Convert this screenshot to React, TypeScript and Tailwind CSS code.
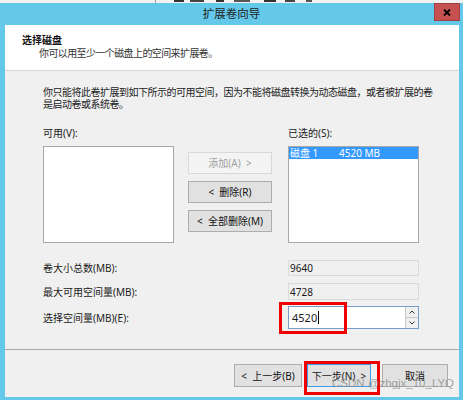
const font = { fontFamily: '"Noto Sans", "Noto Sans CJK SC", sans-serif' };

function Btn({
  children,
  className = '',
  disabled = false,
}: {
  children: React.ReactNode;
  className?: string;
  disabled?: boolean;
}) {
  return (
    <div
      className={`h-[22px] flex items-center justify-center border text-[10px] leading-[12px] whitespace-pre ${
        disabled
          ? 'bg-[#f4f4f4] border-[#d9d9d9] text-[#a0a0a0]'
          : 'bg-[#e1e1e1] border-[#adadad] text-[#111]'
      } ${className}`}
    >
      {children}
    </div>
  );
}

function Spinner() {
  return (
    <div className="w-[13px] flex flex-col border-l border-[#c8c8c8] bg-[#f0f0f0]">
      <div className="flex-1 flex items-center justify-center border-b border-[#c8c8c8]">
        <svg width="6" height="4" viewBox="0 0 6 4">
          <path d="M0.5 3.5 L3 1 L5.5 3.5" fill="none" stroke="#333" strokeWidth="1" />
        </svg>
      </div>
      <div className="flex-1 flex items-center justify-center">
        <svg width="6" height="4" viewBox="0 0 6 4">
          <path d="M0.5 0.5 L3 3 L5.5 0.5" fill="none" stroke="#333" strokeWidth="1" />
        </svg>
      </div>
    </div>
  );
}

export default function App() {
  return (
    <div
      className="w-[463px] h-[400px] bg-[#63c8ea] flex flex-col overflow-hidden text-[#1a1a1a]"
      style={font}
    >
      {/* strip of the window behind */}
      <div className="h-[3px] bg-[#f2f2f2] flex items-start">
        <div className="ml-[155px] w-[1px] h-[3px] bg-[#9a9a9a]" />
        <div className="ml-[18px] w-[10px] h-[2px] bg-[#333]" />
        <div className="ml-[6px] w-[14px] h-[2px] bg-[#444]" />
        <div className="ml-[12px] w-[8px] h-[2px] bg-[#333]" />
        <div className="ml-[10px] w-[16px] h-[2px] bg-[#555]" />
        <div className="ml-[14px] w-[12px] h-[2px] bg-[#333]" />
        <div className="ml-[9px] w-[10px] h-[2px] bg-[#444]" />
        <div className="ml-[11px] w-[6px] h-[2px] bg-[#555]" />
      </div>

      {/* title bar */}
      <div className="relative h-[22px] flex items-center justify-center">
        <span className="text-[11.5px] leading-[14px] text-[#222]">扩展卷向导</span>
        <div className="absolute top-0 right-[3px] w-[26px] h-[18px] bg-[#c75050] border border-[#a04040] flex items-center justify-center">
          <svg width="8" height="7" viewBox="0 0 8 7">
            <path d="M1 0.5 L7 6.5 M7 0.5 L1 6.5" stroke="#000" strokeWidth="1.8" />
          </svg>
        </div>
      </div>

      {/* client area */}
      <div className="ml-[5px] mr-[4px] mb-[3px] flex-1 flex flex-col bg-[#f0f0f0]">
        {/* header */}
        <div className="h-[46px] bg-white border-b border-[#d8d8d8] pl-[17px] pt-[9px]">
          <div className="text-[10px] leading-[12px] font-bold text-[#111]">选择磁盘</div>
          <div className="mt-[1px] ml-[17px] text-[10px] leading-[12px] tracking-[-0.6px] text-[#333]">
            你可以用至少一个磁盘上的空间来扩展卷。
          </div>
        </div>

        {/* body */}
        <div className="h-[278px] pl-[38px] pt-[15px] text-[10px] leading-[12px]">
          <div className="whitespace-nowrap text-[#222] text-[10px] leading-[12px] tracking-[-0.5px]">
            你只能将此卷扩展到如下所示的可用空间，因为不能将磁盘转换为动态磁盘，或者被扩展的卷
            <br />
            是启动卷或系统卷。
          </div>

          <div className="mt-[17px] flex h-[12px]">
            <div className="w-[245px]">可用(V):</div>
            <div>已选的(S):</div>
          </div>

          <div className="mt-[7px] flex h-[97px]">
            <div className="w-[131px] bg-white border border-[#a8a8a8]" />
            <div className="ml-[14px] w-[84px] pt-[6px] flex flex-col gap-[7px]">
              <Btn disabled>{'添加(A)  >'}</Btn>
              <Btn>{'<  删除(R)'}</Btn>
              <Btn>{'<  全部删除(M)'}</Btn>
            </div>
            <div className="ml-[16px] w-[131px] bg-white border border-[#a8a8a8]">
              <div className="h-[12px] bg-[#3399ff] text-white flex items-center whitespace-nowrap">
                <span className="ml-[1px] w-[49px]">磁盘 1</span>
                <span>4520 MB</span>
              </div>
            </div>
          </div>

          <div className="mt-[17px] flex items-center h-[16px]">
            <div className="w-[245px]">卷大小总数(MB):</div>
            <div className="w-[131px] h-[16px] border border-[#dadada] flex items-center pl-[1px]">9640</div>
          </div>

          <div className="mt-[7px] flex items-center h-[17px]">
            <div className="w-[245px]">最大可用空间量(MB):</div>
            <div className="w-[131px] h-[17px] border border-[#dadada] flex items-center pl-[1px]">4728</div>
          </div>

          <div className="mt-[6px] flex items-center h-[23px]">
            <div className="w-[245px]">选择空间量(MB)(E):</div>
            <div className="relative w-[131px] h-[23px] border border-[#7a9cc8] bg-white flex">
              <div className="flex-1 flex items-center pl-[3px] text-[11px]">
                4520
                <span className="ml-[1px] w-[1px] h-[13px] bg-black" />
              </div>
              <Spinner />
              <div className="absolute left-[-10px] top-[-5px] w-[68px] h-[32px] border-[3px] border-[#f00000]" />
            </div>
          </div>
        </div>

        {/* footer */}
        <div className="relative flex-1 border-t border-[#a8a8a8] flex justify-end items-start pt-[14px] pr-[11px]">
          <Btn className="w-[68px] h-[23px]">{'<  上一步(B)'}</Btn>
          <div className="relative ml-[5px]">
            <div className="w-[64px] h-[23px] flex items-center justify-center border border-[#3c9ae6] bg-[#e1e1e1] text-[10px] leading-[12px] whitespace-pre">
              {'下一步(N)  >'}
            </div>
            <div className="absolute left-[-3px] top-[-3px] w-[76px] h-[34px] border-[3px] border-[#f00000]" />
          </div>
          <Btn className="ml-[11px] w-[66px] h-[23px]">取消</Btn>
          <div
            className="absolute left-[327px] top-[26px] text-[11.5px] leading-[14px] text-[#8c8c8c]/80 whitespace-nowrap"
            style={{ fontFamily: '"Liberation Sans", sans-serif' }}
          >
            CSDN @zhgjx_10_LYQ
          </div>
        </div>
      </div>
    </div>
  );
}
